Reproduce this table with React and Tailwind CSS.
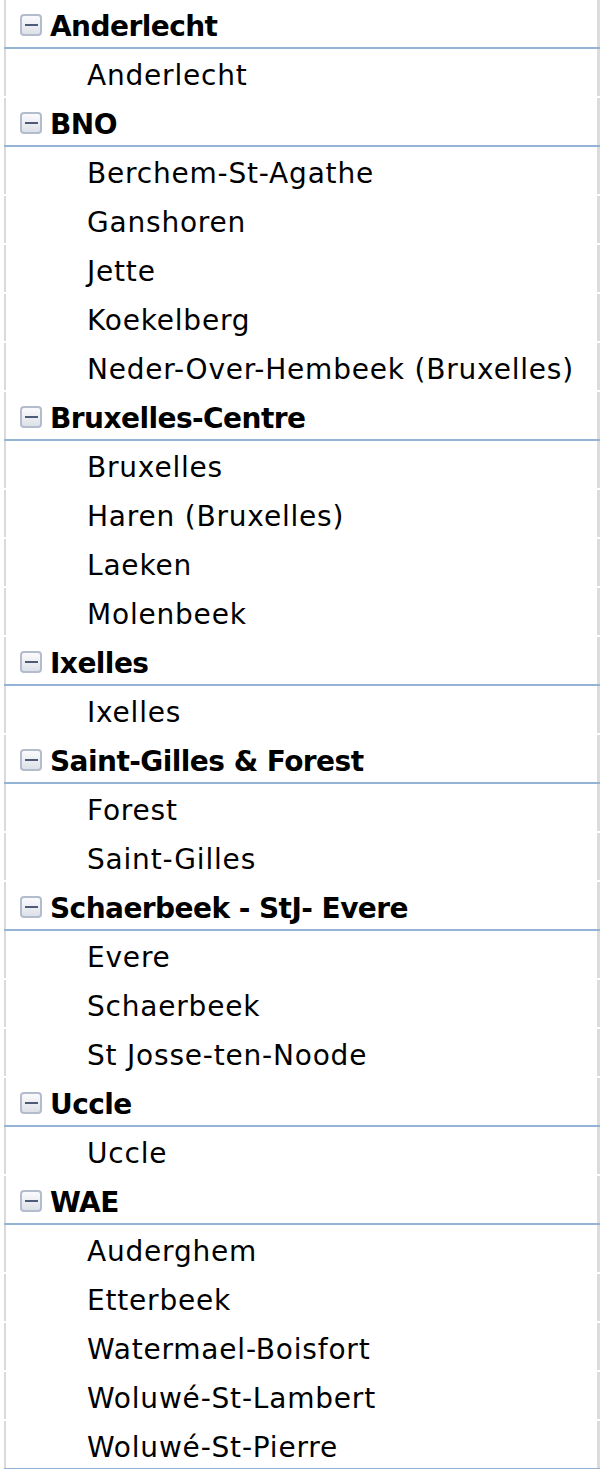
import React from "react";

// PIVOT TABLE ROW LABELS, GROUPED BY ZONE
const zones = [
  { name: "Anderlecht", items: ["Anderlecht"] },
  {
    name: "BNO",
    items: ["Berchem-St-Agathe", "Ganshoren", "Jette", "Koekelberg", "Neder-Over-Hembeek (Bruxelles)"],
  },
  { name: "Bruxelles-Centre", items: ["Bruxelles", "Haren (Bruxelles)", "Laeken", "Molenbeek"] },
  { name: "Ixelles", items: ["Ixelles"] },
  { name: "Saint-Gilles & Forest", items: ["Forest", "Saint-Gilles"] },
  { name: "Schaerbeek - StJ- Evere", items: ["Evere", "Schaerbeek", "St Josse-ten-Noode"] },
  { name: "Uccle", items: ["Uccle"] },
  {
    name: "WAE",
    items: ["Auderghem", "Etterbeek", "Watermael-Boisfort", "Woluwé-St-Lambert", "Woluwé-St-Pierre"],
  },
];

const CollapseIcon = () => (
  <div className="flex h-[22px] w-[22px] shrink-0 items-center justify-center rounded-[4px] border-2 border-[#b3bccc] bg-gradient-to-b from-[#fbfbfd] to-[#dde1e8]">
    <div className="h-[2px] w-[13px] bg-[#4d5b77]" />
  </div>
);

const Row = ({ children, blueLine }) => (
  <div className="flex h-[49px] flex-col">
    <div className="flex h-[47px]">
      <div className="ml-[4px] h-full w-[2px] bg-[#dadada]" />
      <div className="flex-1 min-w-0">{children}</div>
      <div className="h-full w-[3px] bg-[#dcdcdc]" />
    </div>
    <div className={blueLine ? "ml-[4px] h-[2px] bg-[#95b3d7]" : "h-[2px]"} />
  </div>
);

const App = () => {
  return (
    <div className="w-[600px] bg-white text-black" style={{ fontFamily: '"DejaVu Sans", sans-serif' }}>
      {zones.map((zone, zi) => (
        <React.Fragment key={zone.name}>
          <Row blueLine>
            <div className="flex items-start pl-[14px] pt-[14px]">
              <CollapseIcon />
              <span className="ml-[8px] -mt-[1px] whitespace-nowrap text-[28px] font-bold leading-[28px] tracking-[-0.55px]">
                {zone.name}
              </span>
            </div>
          </Row>
          {zone.items.map((item, ii) => (
            <Row key={item + ii} blueLine={zi === zones.length - 1 && ii === zone.items.length - 1}>
              <div className="whitespace-nowrap pl-[81px] pt-[13px] text-[28px] leading-[28px] tracking-[0.8px]">
                {item}
              </div>
            </Row>
          ))}
        </React.Fragment>
      ))}
    </div>
  );
};

export default App;
